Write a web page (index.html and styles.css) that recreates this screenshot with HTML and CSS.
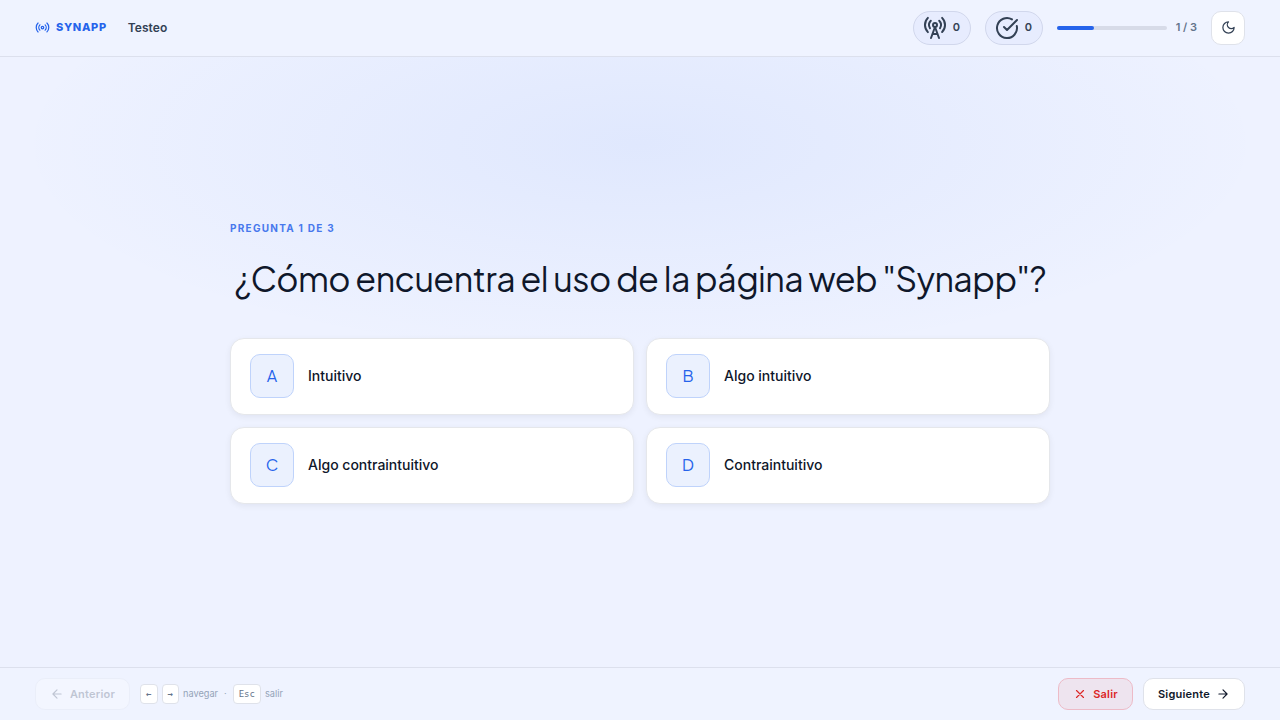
FILE: index.html
```html
<!DOCTYPE html>
<html lang="es">
<head>
<meta charset="utf-8">
<title>Synapp</title>
<link rel="stylesheet" href="styles.css">
</head>
<body>
<div class="app">
  <header class="topbar">
    <div class="brand">
      <svg class="icon" width="15" height="15" viewBox="0 0 24 24"><path d="M4.9 19.1C1 15.2 1 8.8 4.9 4.9M7.8 16.2c-2.3-2.3-2.3-6.1 0-8.5M16.2 7.8c2.3 2.3 2.3 6.1 0 8.5M19.1 4.9C23 8.8 23 15.1 19.1 19"/><circle cx="12" cy="12" r="2"/></svg>
      <span>SYNAPP</span>
    </div>
    <div class="title">Testeo</div>
    <div class="status">
      <div class="pill">
        <svg class="icon" width="24" height="24" viewBox="0 0 24 24"><path d="M4.9 16.1C1 12.2 1 5.8 4.9 1.9M7.8 4.7a6.14 6.14 0 0 0-.8 7.5M16.2 4.8c2 2 2.26 5.11.8 7.47M19.1 1.9a9.96 9.96 0 0 1 0 14.1M9.5 18h5M8 22l4-11 4 11"/><circle cx="12" cy="9" r="2"/></svg>
        <span>0</span>
      </div>
      <div class="pill">
        <svg class="icon" width="24" height="24" viewBox="0 0 24 24"><path d="M21.801 10A10 10 0 1 1 17 3.335M9 11l3 3L22 4"/></svg>
        <span>0</span>
      </div>
      <div class="progress"><div class="track"><div class="fill"></div></div><span class="count">1 / 3</span></div>
      <button class="theme"><svg class="icon" width="15" height="15" viewBox="0 0 24 24"><path d="M12 3a6 6 0 0 0 9 9 9 9 0 1 1-9-9Z"/></svg></button>
    </div>
  </header>
  <main class="stage">
    <section class="quiz">
      <div class="eyebrow">PREGUNTA 1 DE 3</div>
      <h1 class="question">¿Cómo encuentra el uso de la página web "Synapp"?</h1>
      <div class="options">
        <div class="option"><span class="letter">A</span><span class="label">Intuitivo</span></div>
        <div class="option"><span class="letter">B</span><span class="label">Algo intuitivo</span></div>
        <div class="option"><span class="letter">C</span><span class="label">Algo contraintuitivo</span></div>
        <div class="option"><span class="letter">D</span><span class="label">Contraintuitivo</span></div>
      </div>
    </section>
  </main>
  <footer class="bottombar">
    <button class="btn prev"><svg class="icon" width="14" height="14" viewBox="0 0 24 24"><path d="m12 19-7-7 7-7M19 12H5"/></svg><span>Anterior</span></button>
    <div class="hints"><kbd class="arrow">←</kbd><kbd class="arrow">→</kbd><span>navegar</span><span class="dot">·</span><kbd>Esc</kbd><span>salir</span></div>
    <div class="actions">
      <button class="btn exit"><svg class="icon" width="14" height="14" viewBox="0 0 24 24"><path d="M18 6 6 18M6 6l12 12"/></svg><span>Salir</span></button>
      <button class="btn next"><span>Siguiente</span><svg class="icon" width="14" height="14" viewBox="0 0 24 24"><path d="M5 12h14M12 5l7 7-7 7"/></svg></button>
    </div>
  </footer>
</div>
</body>
</html>
```
FILE: styles.css
```css
* { box-sizing: border-box; }
body { margin: 0; font-family: Inter, sans-serif; color: #0f172a; }
button { font: inherit; padding: 0; }
.app {
  height: 720px;
  display: flex;
  flex-direction: column;
  overflow: hidden;
  background: radial-gradient(ellipse 624px 216px at 50% 144px, rgba(37, 99, 235, .07), transparent), #eef2ff;
}
.icon { fill: none; stroke: currentColor; stroke-width: 2; stroke-linecap: round; stroke-linejoin: round; flex: none; display: block; }
.topbar, .bottombar { display: flex; align-items: center; padding: 0 35px; background: #eff3ff; flex: none; }
.topbar { height: 57px; border-bottom: 1px solid #dce0ed; padding-bottom: 1px; }
.brand { display: flex; align-items: center; gap: 6px; color: #2563eb; font-size: 11px; font-weight: 800; letter-spacing: .66px; }
.brand span { padding-bottom: 1px; }
.title { margin-left: 21px; font-size: 12px; font-weight: 600; letter-spacing: .06px; color: #334155; }
.status { margin-left: auto; display: flex; align-items: center; gap: 14px; }
.pill { height: 34px; display: flex; align-items: center; gap: 5.6px; padding: 0 9.6px; border: 1px solid #d1d7ec; border-radius: 17px; background: #e7ecfe; color: #334155; font-size: 11px; font-weight: 600; }
.pill span { padding-bottom: 1px; }
.progress { display: flex; align-items: center; gap: 9px; }
.track { width: 110px; height: 4px; border-radius: 2px; background: #d7dbe8; }
.fill { width: 37px; height: 100%; border-radius: 2px; background: #2563eb; }
.count { font-size: 11px; font-weight: 600; color: #64748b; padding-bottom: 1px; }
.theme { width: 34px; height: 34px; display: grid; place-items: center; border: 1px solid #dfe2ea; border-radius: 10px; background: #fff; color: #334155; }
.stage { flex: 1; display: flex; flex-direction: column; align-items: center; justify-content: center; padding-top: 1px; }
.quiz { width: 820px; }
.eyebrow { font-size: 10px; line-height: 12px; font-weight: 700; letter-spacing: 1.27px; color: #4778ed; }
.question { margin: 22px 0 36px; text-align: center; white-space: nowrap; font-family: "Plus Jakarta Sans", Inter, sans-serif; font-size: 34px; line-height: 46px; font-weight: 400; letter-spacing: -.54px; }
.options { display: grid; grid-template-columns: 1fr 1fr; gap: 12px; }
.option { height: 77px; display: flex; align-items: center; gap: 14px; padding: 0 19px; border: 1px solid #e5e7eb; border-radius: 14px; background: #fff; box-shadow: 0 2px 6px rgba(15, 23, 42, .06); font-size: 14px; font-weight: 500; }
.label { padding-bottom: 1px; }
.letter { width: 44px; height: 44px; display: grid; place-items: center; padding-bottom: 1px; border: 1px solid #bfd3fb; border-radius: 10px; background: #ebf1fe; color: #2563eb; font-family: "Plus Jakarta Sans", Inter, sans-serif; font-size: 16px; font-weight: 400; }
.bottombar { height: 53px; border-top: 1px solid #dce0ed; }
.btn { height: 32px; display: flex; align-items: center; justify-content: center; gap: 6px; padding: 0 13px; border: 1px solid #dfe2ea; border-radius: 10px; background: #fff; color: #0f172a; font-size: 11px; font-weight: 600; letter-spacing: .22px; }
.prev { width: 95px; color: #334155; opacity: .25; }
.exit { width: 75px; color: #dc2626; background: #eee4ef; border-color: #edbbc7; }
.next { width: 102px; }
.actions { margin-left: auto; display: flex; gap: 10px; }
.hints { display: flex; align-items: center; gap: 4px; margin-left: 10px; color: #94a3b8; font-size: 9.2px; }
.hints span { padding-bottom: 1px; }
.hints .dot { margin: 0 2px; }
kbd { height: 20px; min-width: 17.5px; display: grid; place-items: center; padding: 0 5px; border: 1px solid #dfe2ea; border-radius: 4px; background: #fff; color: #64748b; font: 9px "DejaVu Sans Mono", monospace; }
.arrow { font-weight: 700; }
```
